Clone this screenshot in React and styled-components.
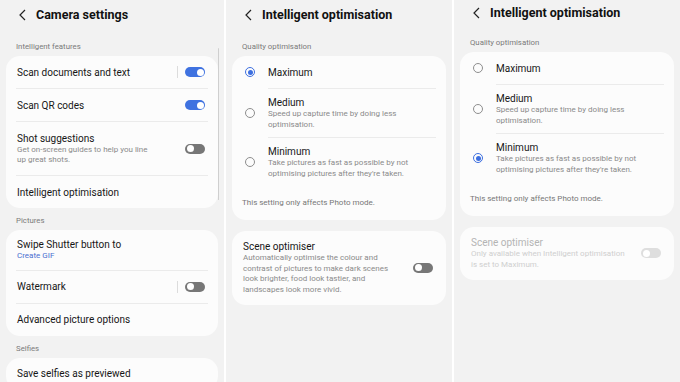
import styled, { createGlobalStyle } from 'styled-components';

const GlobalStyle = createGlobalStyle`
  html, body {
    margin: 0;
    padding: 0;
    background: #ffffff;
  }
  body {
    font-family: Roboto, "Noto Sans", sans-serif;
    -webkit-font-smoothing: antialiased;
  }
`;

const Screens = styled.div`
  display: flex;
  gap: 2px;
  width: 680px;
  height: 382px;
  overflow: hidden;
  background: #ffffff;
`;

const Screen = styled.div`
  position: relative;
  width: ${(p) => p.$width}px;
  flex-shrink: 0;
  height: 100%;
  background: #f2f2f2;
  padding: 0 6px;
  box-sizing: border-box;
  overflow: hidden;
`;

// panel 3 sits a few px higher in the reference
const Header = styled.div`
  display: flex;
  align-items: center;
  gap: 10px;
  padding: ${(p) => (p.$lifted ? '6px 0 18px 13px' : '8px 0 20px 13px')};
  font-size: 12.5px;
  line-height: 14px;
  font-weight: 700;
  color: #111;
`;

const SectionLabel = styled.div`
  padding: ${(p) => (p.$first ? 0 : 8)}px 10px 4px;
  font-size: 7.8px;
  line-height: 10px;
  color: #7a7a7a;
`;

const Card = styled.div`
  background: #fcfcfc;
  border-radius: 14px;
  margin-bottom: ${(p) => p.$gap || 0}px;
`;

const Row = styled.div`
  display: flex;
  align-items: center;
  padding: ${(p) => (p.$tight ? 8 : 9.5)}px 13px ${(p) => (p.$tight ? 8 : 9.5)}px 11px;
`;

const OptionRow = styled.div`
  display: flex;
  align-items: center;
  min-height: 32px;
  box-sizing: border-box;
  padding: 7px 10px 7px 0;
`;

const RadioCell = styled.div`
  width: 36px;
  flex-shrink: 0;
  display: flex;
  justify-content: center;
`;

const Text = styled.div`
  flex: 1;
  min-width: 0;
`;

const Title = styled.div`
  font-size: 10px;
  line-height: 13px;
  color: ${(p) => (p.$muted ? '#b4b4b4' : '#161616')};
`;

const Sub = styled.div`
  font-size: 8px;
  line-height: 10.5px;
  color: ${(p) => (p.$link ? '#4a6fd0' : p.$muted ? '#cfcfcf' : '#8a8a8a')};
  padding-right: ${(p) => p.$pr || 0}px;
`;

const Note = styled.div`
  padding: 12px 10px 11px;
  font-size: 8px;
  line-height: 10.5px;
  color: #777;
`;

const Divider = styled.div`
  height: 1px;
  background: #ebebeb;
  margin: 0 10px 0 ${(p) => p.$inset || 10}px;
`;

const Sep = styled.div`
  width: 1px;
  height: 12px;
  background: #dcdcdc;
  margin-right: 7px;
`;

const Track = styled.div`
  position: relative;
  width: 20px;
  height: 10px;
  border-radius: 5px;
  flex-shrink: 0;
  background: ${(p) => (p.$on ? '#3f72e0' : p.$muted ? '#dedede' : '#777777')};
`;

const Knob = styled.div`
  position: absolute;
  top: 1.5px;
  left: ${(p) => (p.$on ? 11.5 : 1.5)}px;
  width: 7px;
  height: 7px;
  border-radius: 50%;
  background: #fff;
`;

const Radio = styled.div`
  width: 10px;
  height: 10px;
  border-radius: 50%;
  box-sizing: border-box;
  border: ${(p) => (p.$on ? '1.4px solid #3d6fe0' : '1px solid #8e8e8e')};
  display: flex;
  align-items: center;
  justify-content: center;
  &::after {
    content: '';
    display: ${(p) => (p.$on ? 'block' : 'none')};
    width: 5px;
    height: 5px;
    border-radius: 50%;
    background: #3d6fe0;
  }
`;

const Scrollbar = styled.div`
  position: absolute;
  right: 5px;
  top: 48px;
  width: 1.5px;
  height: 152px;
  border-radius: 1px;
  background: #cfcfcf;
`;

function Back() {
  return (
    <svg width="7" height="12" viewBox="0 0 7 12">
      <polyline points="6,1 1,6 6,11" fill="none" stroke="#222" strokeWidth="1.2" />
    </svg>
  );
}

function Toggle({ on, sep, muted }) {
  return (
    <>
      {sep && <Sep />}
      <Track $on={on} $muted={muted}>
        <Knob $on={on} />
      </Track>
    </>
  );
}

function Option({ on, title, sub }) {
  return (
    <OptionRow>
      <RadioCell>
        <Radio $on={on} />
      </RadioCell>
      <Text>
        <Title>{title}</Title>
        {sub && <Sub $pr={12}>{sub}</Sub>}
      </Text>
    </OptionRow>
  );
}

function QualityScreen({ selected, lifted, sceneDisabled }) {
  return (
    <Screen $width={226}>
      <Header $lifted={lifted}>
        <Back />
        Intelligent optimisation
      </Header>
      <SectionLabel $first>Quality optimisation</SectionLabel>
      <Card $gap={11}>
        <Option on={selected === 'max'} title="Maximum" />
        <Divider $inset={36} />
        <Option
          on={selected === 'med'}
          title="Medium"
          sub="Speed up capture time by doing less optimisation."
        />
        <Divider $inset={36} />
        <Option
          on={selected === 'min'}
          title="Minimum"
          sub="Take pictures as fast as possible by not optimising pictures after they're taken."
        />
        <Note>This setting only affects Photo mode.</Note>
      </Card>
      <Card>
        {sceneDisabled ? (
          <Row>
            <Text>
              <Title $muted>Scene optimiser</Title>
              <Sub $muted $pr={12}>
                Only available when Intelligent optimisation is set to Maximum.
              </Sub>
            </Text>
            <Toggle on={false} muted />
          </Row>
        ) : (
          <Row>
            <Text>
              <Title>Scene optimiser</Title>
              <Sub $pr={20}>
                Automatically optimise the colour and contrast of pictures to make dark scenes
                look brighter, food look tastier, and landscapes look more vivid.
              </Sub>
            </Text>
            <Toggle on={false} />
          </Row>
        )}
      </Card>
    </Screen>
  );
}

export default function App() {
  return (
    <Screens>
      <GlobalStyle />
      <Screen $width={224}>
        <Header>
          <Back />
          Camera settings
        </Header>
        <SectionLabel $first>Intelligent features</SectionLabel>
        <Card>
          <Row>
            <Text>
              <Title>Scan documents and text</Title>
            </Text>
            <Toggle on sep />
          </Row>
          <Divider />
          <Row>
            <Text>
              <Title>Scan QR codes</Title>
            </Text>
            <Toggle on />
          </Row>
          <Divider />
          <Row>
            <Text>
              <Title>Shot suggestions</Title>
              <Sub $pr={30}>Get on-screen guides to help you line up great shots.</Sub>
            </Text>
            <Toggle on={false} />
          </Row>
          <Divider />
          <Row>
            <Text>
              <Title>Intelligent optimisation</Title>
            </Text>
          </Row>
        </Card>
        <SectionLabel>Pictures</SectionLabel>
        <Card>
          <Row $tight>
            <Text>
              <Title>Swipe Shutter button to</Title>
              <Sub $link>Create GIF</Sub>
            </Text>
          </Row>
          <Divider />
          <Row>
            <Text>
              <Title>Watermark</Title>
            </Text>
            <Toggle on={false} sep />
          </Row>
          <Divider />
          <Row>
            <Text>
              <Title>Advanced picture options</Title>
            </Text>
          </Row>
        </Card>
        <SectionLabel>Selfies</SectionLabel>
        <Card>
          <Row>
            <Text>
              <Title>Save selfies as previewed</Title>
            </Text>
          </Row>
        </Card>
        <Scrollbar />
      </Screen>
      <QualityScreen selected="max" />
      <QualityScreen selected="min" lifted sceneDisabled />
    </Screens>
  );
}
